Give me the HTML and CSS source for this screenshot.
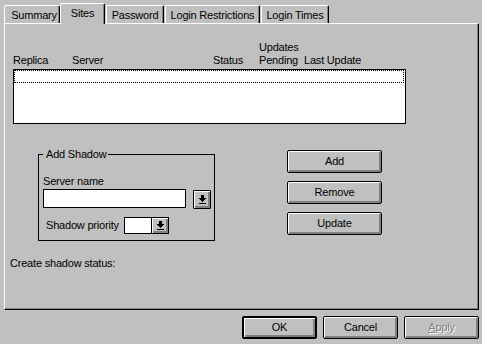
FILE: index.html
```html
<!DOCTYPE html>
<html lang="en">

<head>
    <meta charset="UTF-8">
    <title>Sites</title>
    <link rel="stylesheet" href="styles.css">
</head>

<body>

    <section class="dialog">

        <div class="tabs">
            <div class="tab tab-summary">Summary</div>
            <div class="tab tab-sites active">Sites</div>
            <div class="tab tab-password">Password</div>
            <div class="tab tab-restrictions">Login Restrictions</div>
            <div class="tab tab-times">Login Times</div>
        </div>

        <div class="panel">

            <div class="list-head">
                <span>Replica</span>
                <span>Server</span>
                <span>Status</span>
                <span>Updates<br>Pending</span>
                <span>Last Update</span>
            </div>
            <div class="list">
                <div class="list-row"></div>
            </div>

            <div class="shadow-row">
                <fieldset class="group">
                    <legend>Add Shadow</legend>
                    <div class="field-label">Server name</div>
                    <div class="server-row">
                        <div class="textbox"></div>
                        <button class="drop-btn">
                            <svg width="7" height="9" viewBox="0 0 7 9" shape-rendering="crispEdges"><rect x="2" y="0" width="3" height="3"/><path d="M0 3h7v1h-1v1h-1v1h-1v1h-1v-1h-1v-1h-1v-1h-1z"/><rect x="0" y="8" width="7" height="1"/></svg>
                        </button>
                    </div>
                    <div class="priority-row">
                        <span class="priority-label">Shadow priority</span>
                        <div class="combo">
                            <div class="combo-text"></div>
                            <button class="drop-btn">
                                <svg width="7" height="9" viewBox="0 0 7 9" shape-rendering="crispEdges"><rect x="2" y="0" width="3" height="3"/><path d="M0 3h7v1h-1v1h-1v1h-1v1h-1v-1h-1v-1h-1v-1h-1z"/><rect x="0" y="8" width="7" height="1"/></svg>
                            </button>
                        </div>
                    </div>
                </fieldset>

                <div class="actions">
                    <button class="btn">Add</button>
                    <button class="btn">Remove</button>
                    <button class="btn">Update</button>
                </div>
            </div>

            <div class="status">Create shadow status:</div>

        </div>

        <div class="footer">
            <button class="btn btn-default">OK</button>
            <button class="btn">Cancel</button>
            <button class="btn disabled"><u>A</u>pply</button>
        </div>

    </section>

</body>

</html>
```

FILE: styles.css
```css
body {
    margin: 0;
    background: #c0c0c0;
    color: #000;
    font-family: "Liberation Sans", Arial, sans-serif;
    font-size: 11px;
    line-height: 13px;
    letter-spacing: -0.2px;
}

.dialog {
    padding: 3px 3px 0 4px;
}

/* tab strip */

.tabs {
    display: flex;
    align-items: flex-end;
    height: 20px;
}

.tab {
    box-sizing: border-box;
    height: 18px;
    padding-top: 3px;
    text-align: center;
    border-top: 1px solid #fff;
    border-left: 1px solid #fff;
    border-right: 1px solid #000;
    border-radius: 2px 2px 0 0;
    box-shadow: inset -1px 0 #808080;
    margin-left: 1px;
}

.tab.active {
    height: 21px;
    margin-bottom: -1px;
    position: relative;
    z-index: 1;
    background: #c0c0c0;
}

.tab-summary { width: 56px; margin-left: 0; padding-left: 4px; }
.tab-sites { width: 45px; margin-left: 0; }
.tab-password { width: 58px; }
.tab-restrictions { width: 95px; }
.tab-times { width: 68px; }

/* page */

.panel {
    box-sizing: border-box;
    height: 287px;
    border: 1px solid;
    border-color: #fff #000 #000 #fff;
    box-shadow: inset -1px -1px #808080;
    padding: 17px 0 0 5px;
}

.list-head {
    display: grid;
    grid-template-columns: 59px 141px 46px 45px auto;
    align-items: end;
    margin-left: 3px;
}

.list {
    box-sizing: border-box;
    width: 393px;
    height: 55px;
    margin: 2px 0 0 3px;
    border: 1px solid #000;
    background: #fff;
}

.list-row {
    box-sizing: border-box;
    height: 13px;
    margin-right: 1px;
    border: 1px dotted #000;
}

.shadow-row {
    display: flex;
    align-items: flex-start;
    margin-top: 24px;
}

.group {
    box-sizing: border-box;
    width: 177px;
    margin: 0 0 0 28px;
    padding: 0 3px 6px 4px;
    border: 1px solid #000;
}

.group legend {
    padding: 0 2px 0 3px;
    line-height: 13px;
}

.field-label {
    margin-top: 14px;
}

.server-row {
    display: flex;
    gap: 7px;
    margin-top: 1px;
}

.textbox {
    box-sizing: border-box;
    width: 143px;
    height: 19px;
    border: 1px solid #000;
    background: #fff;
}

.drop-btn {
    box-sizing: border-box;
    display: flex;
    align-items: center;
    justify-content: center;
    width: 18px;
    height: 19px;
    margin-top: 1px;
    padding: 0;
    border: 1px solid #000;
    border-radius: 1px;
    background: #c0c0c0;
    box-shadow: inset 1px 1px #fff, inset -1px -1px #808080, inset -2px -2px #808080;
}

.priority-row {
    display: flex;
    align-items: center;
    margin-top: 8px;
}

.priority-label {
    width: 78px;
    padding-left: 3px;
}

.combo {
    box-sizing: border-box;
    display: flex;
    width: 45px;
    height: 17px;
    border: 1px solid #000;
    background: #fff;
}

.combo-text {
    flex: 1;
}

.combo .drop-btn {
    width: 17px;
    height: 15px;
    margin: 0;
    border: 0;
    border-left: 1px solid #000;
    border-radius: 0;
}

.actions {
    display: flex;
    flex-direction: column;
    gap: 8px;
    margin: 2px 0 0 72px;
}

.status {
    margin-top: 16px;
}

/* buttons */

.btn {
    box-sizing: border-box;
    width: 95px;
    height: 23px;
    padding: 0;
    font: inherit;
    letter-spacing: inherit;
    color: #000;
    background: #c0c0c0;
    border: 1px solid #000;
    border-radius: 2px;
    box-shadow: inset 1px 1px #fff, inset -1px -1px #808080, inset -2px -2px #808080;
}

.btn-default {
    border-width: 2px;
}

.btn.disabled {
    color: #808080;
    text-shadow: 1px 1px 0 #fff;
}

.footer {
    display: flex;
    justify-content: flex-end;
    gap: 6px;
    margin-top: 6px;
}

.footer .btn {
    width: 75px;
}
```
